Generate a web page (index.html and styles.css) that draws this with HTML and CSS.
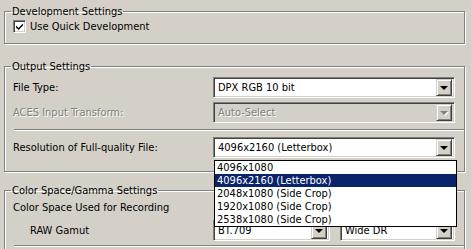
FILE: index.html
```html
<!DOCTYPE html>
<html lang="en">
<head>
  <meta charset="UTF-8" />
  <title>Development Settings</title>
  <link rel="stylesheet" href="styles.css">
</head>
<body>

  <fieldset class="group group-dev">
    <legend>Development Settings</legend>
    <label class="check">
      <span class="check-box">
        <svg width="9" height="9" viewBox="0 0 9 9"><path d="M1 3.5 L3.5 6 L8 1.5 L8 3.5 L3.5 8 L1 5.5 Z" fill="#000"/></svg>
      </span>
      Use Quick Development
    </label>
  </fieldset>

  <fieldset class="group group-out">
    <legend>Output Settings</legend>

    <div class="row row-first">
      <span class="lbl">File Type:</span>
      <div class="combo">
        <span class="combo-text">DPX RGB 10 bit</span>
        <span class="combo-btn"><span class="tri"></span></span>
      </div>
    </div>

    <div class="row row-disabled">
      <span class="lbl">ACES Input Transform:</span>
      <div class="combo">
        <span class="combo-text">Auto-Select</span>
        <span class="combo-btn"><span class="tri"></span></span>
      </div>
    </div>

    <div class="sep"></div>

    <div class="row row-res">
      <span class="lbl">Resolution of Full-quality File:</span>
      <div class="combo combo-open">
        <span class="combo-text">4096x2160 (Letterbox)</span>
        <span class="combo-btn"><span class="tri"></span></span>
        <ul class="droplist">
          <li>4096x1080</li>
          <li class="selected">4096x2160 (Letterbox)</li>
          <li>2048x1080 (Side Crop)</li>
          <li>1920x1080 (Side Crop)</li>
          <li>2538x1080 (Side Crop)</li>
        </ul>
      </div>
    </div>
  </fieldset>

  <fieldset class="group group-color">
    <legend>Color Space/Gamma Settings</legend>
    <div class="sub-title">Color Space Used for Recording</div>
    <div class="row row-gamut">
      <span class="lbl lbl-indent">RAW Gamut</span>
      <div class="combo combo-small">
        <span class="combo-text">BT.709</span>
        <span class="combo-btn"><span class="tri"></span></span>
      </div>
      <div class="combo combo-wide">
        <span class="combo-text">Wide DR</span>
        <span class="combo-btn"><span class="tri"></span></span>
      </div>
    </div>
    <div class="sep sep-bottom"></div>
  </fieldset>

</body>
</html>
```

FILE: styles.css
```css
* {
  box-sizing: border-box;
}

body {
  margin: 0;
  background-color: #d4d0c8;
  font-family: 'DejaVu Sans Condensed', 'Liberation Sans', sans-serif;
  font-size: 11px;
  color: #000;
  overflow: hidden;
  height: 249px;
}

/* group boxes */
.group {
  width: 461px;
  margin: 0 0 0 4px;
  padding: 0 0 0 6px;
  border: 1px solid #808080;
  box-shadow: 1px 1px 0 #fff, inset 1px 1px 0 #fff;
}

.group legend {
  padding: 0 1px;
  line-height: 13px;
}

.group-dev {
  margin-top: 5px;
  padding-bottom: 10px;
}

.group-out {
  margin-top: 16px;
  padding-bottom: 13px;
}

.group-color {
  margin-top: 12px;
  padding-bottom: 10px;
}

/* checkbox */
.check {
  display: flex;
  align-items: center;
  gap: 4px;
  margin-top: 2px;
  padding-left: 2px;
  line-height: 13px;
}

.check-box {
  display: flex;
  align-items: center;
  justify-content: center;
  width: 13px;
  height: 13px;
  background-color: #fff;
  border: 1px solid;
  border-color: #808080 #fff #fff #808080;
  box-shadow: inset 1px 1px 0 #404040, inset -1px -1px 0 #d4d0c8;
}

/* rows */
.row {
  display: flex;
  align-items: center;
  margin-top: 4px;
}

.row-res {
  margin-top: 6px;
}

.lbl {
  width: 202px;
  padding-left: 2px;
}

.lbl-indent {
  padding-left: 19px;
}

.sub-title {
  margin-top: 4px;
  padding-left: 2px;
  line-height: 13px;
}

.row-gamut {
  margin-top: 6px;
}

/* combo boxes */
.combo {
  position: relative;
  display: flex;
  align-items: center;
  width: 242px;
  height: 21px;
  background-color: #fff;
  border: 1px solid;
  border-color: #808080 #fff #fff #808080;
  box-shadow: inset 1px 1px 0 #404040, inset -1px -1px 0 #d4d0c8;
  padding: 2px;
}

.combo-text {
  flex: 1;
  padding-left: 2px;
  white-space: nowrap;
  overflow: hidden;
}

.combo-btn {
  display: flex;
  align-items: center;
  justify-content: center;
  width: 16px;
  height: 17px;
  background-color: #d4d0c8;
  border: 1px solid;
  border-color: #d4d0c8 #404040 #404040 #d4d0c8;
  box-shadow: inset 1px 1px 0 #fff, inset -1px -1px 0 #808080;
}

.tri {
  width: 0;
  height: 0;
  border-left: 4px solid transparent;
  border-right: 4px solid transparent;
  border-top: 4px solid #000;
  margin-top: 1px;
}

.combo-small {
  width: 117px;
}

.combo-wide {
  width: 115px;
  margin-left: 10px;
}

/* disabled row */
.row-disabled .lbl,
.row-disabled .combo-text {
  color: #808080;
  text-shadow: 1px 1px 0 #fff;
}

.row-disabled .combo {
  background-color: #d4d0c8;
}

.row-disabled .tri {
  border-top-color: #808080;
  filter: drop-shadow(1px 1px 0 #fff);
}

/* separators */
.sep {
  height: 2px;
  margin: 6px 0 0 3px;
  border-top: 1px solid #808080;
  border-bottom: 1px solid #fff;
}

.sep-bottom {
  margin-top: 4px;
}

/* open drop list */
.droplist {
  position: absolute;
  top: calc(100% + 3px);
  left: 0;
  width: 243px;
  margin: 0;
  padding: 0;
  list-style: none;
  background-color: #fff;
  border: 1px solid #000;
  z-index: 2;
}

.droplist li {
  height: 13px;
  line-height: 13px;
  padding-left: 2px;
  white-space: nowrap;
}

.droplist li.selected {
  background-color: #0a246a;
  color: #fff;
}
```
